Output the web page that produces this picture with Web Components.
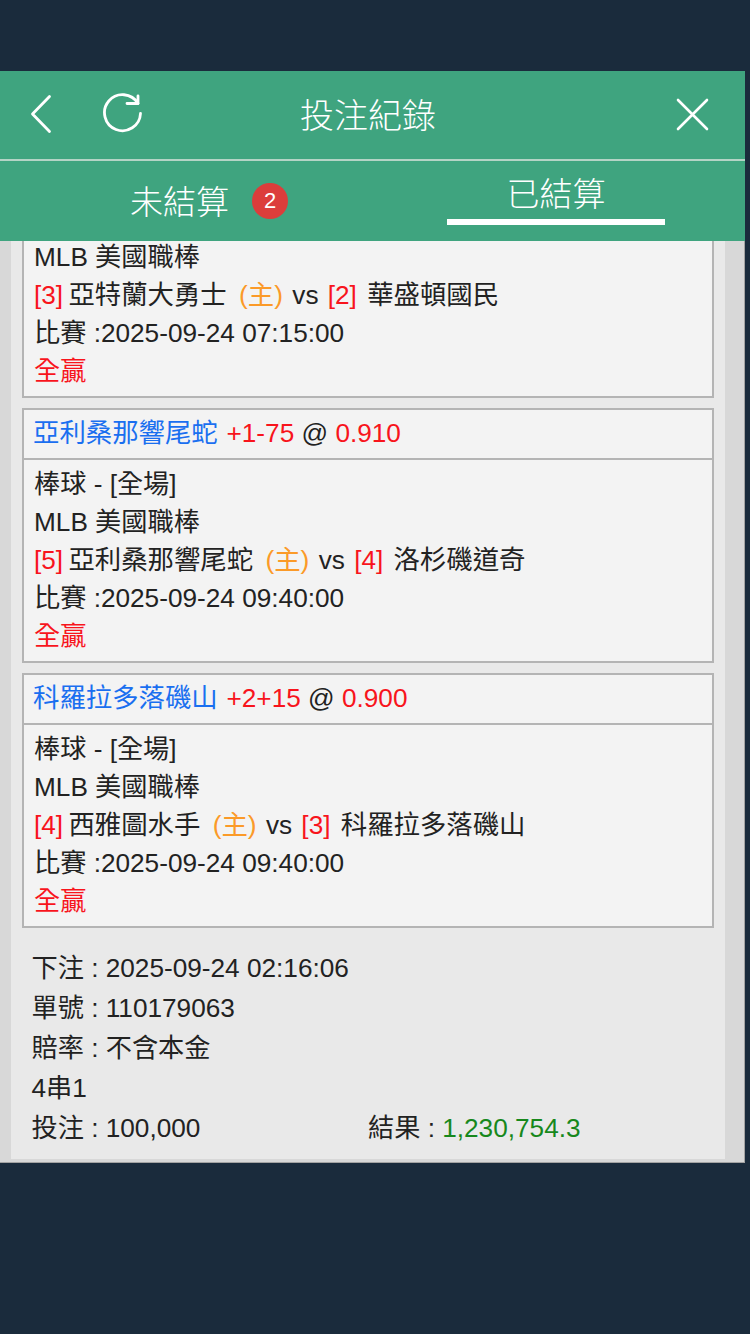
<!DOCTYPE html>
<html lang="zh-Hant">
<head>
<meta charset="utf-8">
<title>投注紀錄</title>
<style>
  html, body { margin: 0; height: 100%; background: #1a2b3c; }
  body {
    font-family: "Liberation Sans", "Noto Sans CJK TC", sans-serif;
    font-size: 26.2px;
    color: #222;
    padding-top: 71px;
    box-sizing: border-box;
    overflow: hidden;
  }
</style>
</head>
<body>
<bet-panel>
  <panel-header slot="header" title-text="投注紀錄"></panel-header>
  <tab-bar slot="tabs" badge="2"></tab-bar>

  <bet-leg clipped>
    <leg-line>MLB 美國職棒</leg-line>
    <leg-line><bet-text tone="red">[3]</bet-text> <bet-text tone="team" lead="-2">亞特蘭大勇士</bet-text> <bet-text tone="orange" lead="5">(主)</bet-text> <bet-text lead="2">vs</bet-text> <bet-text tone="red" lead="2">[2]</bet-text> <bet-text tone="team" lead="3">華盛頓國民</bet-text></leg-line>
    <leg-line>比賽 :2025-09-24 07:15:00</leg-line>
    <leg-line><bet-text tone="red">全贏</bet-text></leg-line>
  </bet-leg>

  <bet-leg>
    <leg-line slot="title"><bet-text tone="blue" lead="-1">亞利桑那響尾蛇</bet-text> <bet-text tone="red" lead="1.5">+1-75</bet-text> @ <bet-text tone="red">0.910</bet-text></leg-line>
    <leg-line>棒球 - [全場]</leg-line>
    <leg-line>MLB 美國職棒</leg-line>
    <leg-line><bet-text tone="red">[5]</bet-text> <bet-text tone="team" lead="-2">亞利桑那響尾蛇</bet-text> <bet-text tone="orange" lead="5">(主)</bet-text> <bet-text lead="2">vs</bet-text> <bet-text tone="red" lead="2">[4]</bet-text> <bet-text tone="team" lead="3">洛杉磯道奇</bet-text></leg-line>
    <leg-line>比賽 :2025-09-24 09:40:00</leg-line>
    <leg-line><bet-text tone="red">全贏</bet-text></leg-line>
  </bet-leg>

  <bet-leg>
    <leg-line slot="title"><bet-text tone="blue" lead="-1">科羅拉多落磯山</bet-text> <bet-text tone="red" lead="1.5">+2+15</bet-text> @ <bet-text tone="red">0.900</bet-text></leg-line>
    <leg-line>棒球 - [全場]</leg-line>
    <leg-line>MLB 美國職棒</leg-line>
    <leg-line><bet-text tone="red">[4]</bet-text> <bet-text tone="team" lead="-2">西雅圖水手</bet-text> <bet-text tone="orange" lead="5">(主)</bet-text> <bet-text lead="2">vs</bet-text> <bet-text tone="red" lead="2">[3]</bet-text> <bet-text tone="team" lead="3">科羅拉多落磯山</bet-text></leg-line>
    <leg-line>比賽 :2025-09-24 09:40:00</leg-line>
    <leg-line><bet-text tone="red">全贏</bet-text></leg-line>
  </bet-leg>

  <bet-summary>
    <div>下注 : 2025-09-24 02:16:06</div>
    <div>單號 : 110179063</div>
    <div>賠率 : 不含本金</div>
    <div>4串1</div>
    <div>投注 : 100,000</div>
    <div slot="result">結果 : <bet-text tone="green">1,230,754.3</bet-text></div>
  </bet-summary>
</bet-panel>

<script>
class BetPanel extends HTMLElement {
  constructor() {
    super();
    this.attachShadow({ mode: 'open' });
    this.shadowRoot.innerHTML = `
      <style>
        :host {
          display: block;
          width: 745px;
          background: #d8d8d8;
          box-shadow: inset -1px -1px 0 #a3a3a3;
        }
        .content {
          margin: 0 20px 0 11px;
          background: #e9e9e9;
          height: 918px;
          overflow: hidden;
        }
        .foot { height: 4px; }
      </style>
      <slot name="header"></slot>
      <slot name="tabs"></slot>
      <div class="content"><slot></slot></div>
      <div class="foot"></div>`;
  }
}

class PanelHeader extends HTMLElement {
  constructor() {
    super();
    this.attachShadow({ mode: 'open' });
    this.shadowRoot.innerHTML = `
      <style>
        :host {
          display: grid;
          grid-template-columns: 300px auto 1fr;
          align-items: center;
          height: 88px;
          background: #3fa47f;
          color: #fff;
          border-bottom: 2px solid #b4d4c6;
          font-size: 34px;
          font-weight: 300;
        }
        .left { display: flex; align-items: center; gap: 48px; padding: 0 0 3px 29px; }
        .right { display: flex; justify-content: flex-end; padding: 0 36px 3px 0; }
        .title { padding-bottom: 4px; }
        svg { display: block; fill: none; stroke: #fff; stroke-linecap: round; stroke-linejoin: round; }
      </style>
      <div class="left">
        <svg width="24" height="40" viewBox="0 0 24 40" stroke-width="2.8"><path d="M20.5 2.5 3.5 20l17 17.5"/></svg>
        <svg width="42" height="42" viewBox="0 0 42 42" stroke-width="2.8"><path d="M37 10.5A18 18 0 1 0 39.5 20.5"/><path d="M26 10.5h11V3"/></svg>
      </div>
      <div class="title"></div>
      <div class="right">
        <svg width="34" height="34" viewBox="0 0 34 34" stroke-width="2.6"><path d="M3 3 32 32M32 3 3 32"/></svg>
      </div>`;
    this.shadowRoot.querySelector('.title').textContent = this.getAttribute('title-text');
  }
}

class TabBar extends HTMLElement {
  constructor() {
    super();
    this.attachShadow({ mode: 'open' });
    this.shadowRoot.innerHTML = `
      <style>
        :host {
          display: grid;
          grid-template-columns: 447px 218px;
          height: 80px;
          background: #3fa47f;
          color: #fff;
          font-size: 33px;
          font-weight: 300;
        }
        .pending { display: flex; align-items: center; gap: 23px; padding: 0 0 0 130px; }
        .pending span:first-child { padding-bottom: 2px; }
        .badge {
          width: 36px;
          height: 36px;
          border-radius: 50%;
          background: #dc3d3b;
          font-size: 22px;
          font-weight: 400;
          display: flex;
          align-items: center;
          justify-content: center;
        }
        .settled {
          display: flex;
          align-items: center;
          justify-content: center;
          height: 64px;
          box-sizing: border-box;
          padding-top: 4px;
          border-bottom: 6px solid #fff;
        }
      </style>
      <div class="pending"><span>未結算</span><span class="badge"></span></div>
      <div class="settled">已結算</div>`;
    this.shadowRoot.querySelector('.badge').textContent = this.getAttribute('badge');
  }
}

class BetLeg extends HTMLElement {
  constructor() {
    super();
    this.attachShadow({ mode: 'open' });
    this.shadowRoot.innerHTML = `
      <style>
        :host {
          display: block;
          margin: 0 11px 10px;
          background: #f3f3f3;
          border: 2px solid #b4b4b4;
        }
        :host([clipped]) { border-top: 0; }
        .title {
          padding: 4px 10px 5px;
          border-bottom: 2px solid #b4b4b4;
          height: 39px;
        }
        .rows { padding: 5px 10px 6px; }
        :host([clipped]) .title { display: none; }
        :host([clipped]) .rows { padding-top: 0; margin-top: -3px; }
      </style>
      <div class="title"><slot name="title"></slot></div>
      <div class="rows"><slot></slot></div>`;
  }
}

class LegLine extends HTMLElement {
  constructor() {
    super();
    this.attachShadow({ mode: 'open' });
    this.shadowRoot.innerHTML = `
      <style>
        :host { display: block; line-height: 38px; height: 38px; white-space: nowrap; }
      </style>
      <slot></slot>`;
  }
}

class BetText extends HTMLElement {
  constructor() {
    super();
    this.attachShadow({ mode: 'open' });
    this.shadowRoot.innerHTML = `
      <style>
        :host { display: inline-block; }
        :host([tone="red"]) { color: #f8141c; }
        :host([tone="blue"]) { color: #1a6ff0; font-size: 26.4px; }
        :host([tone="team"]) { font-size: 26.4px; }
        :host([tone="orange"]) { color: #fb9a28; font-size: 26.4px; }
        :host([tone="green"]) { color: #17881c; }
      </style>
      <slot></slot>`;
  }
  connectedCallback() {
    // small nudges, the reference font has different side bearings
    if (this.hasAttribute('lead')) this.style.marginLeft = `${this.getAttribute('lead')}px`;
  }
}

class BetSummary extends HTMLElement {
  constructor() {
    super();
    this.attachShadow({ mode: 'open' });
    this.shadowRoot.innerHTML = `
      <style>
        :host {
          display: grid;
          grid-template-columns: 336.5px 1fr;
          grid-auto-rows: 40px;
          align-items: center;
          padding: 8px 0 0 20.5px;
        }
        .result { grid-column: 2; grid-row: 5; }
        ::slotted(div) { grid-column: 1; white-space: nowrap; }
      </style>
      <slot></slot>
      <div class="result"><slot name="result"></slot></div>`;
  }
}

customElements.define('bet-panel', BetPanel);
customElements.define('panel-header', PanelHeader);
customElements.define('tab-bar', TabBar);
customElements.define('bet-leg', BetLeg);
customElements.define('leg-line', LegLine);
customElements.define('bet-text', BetText);
customElements.define('bet-summary', BetSummary);
</script>
</body>
</html>
